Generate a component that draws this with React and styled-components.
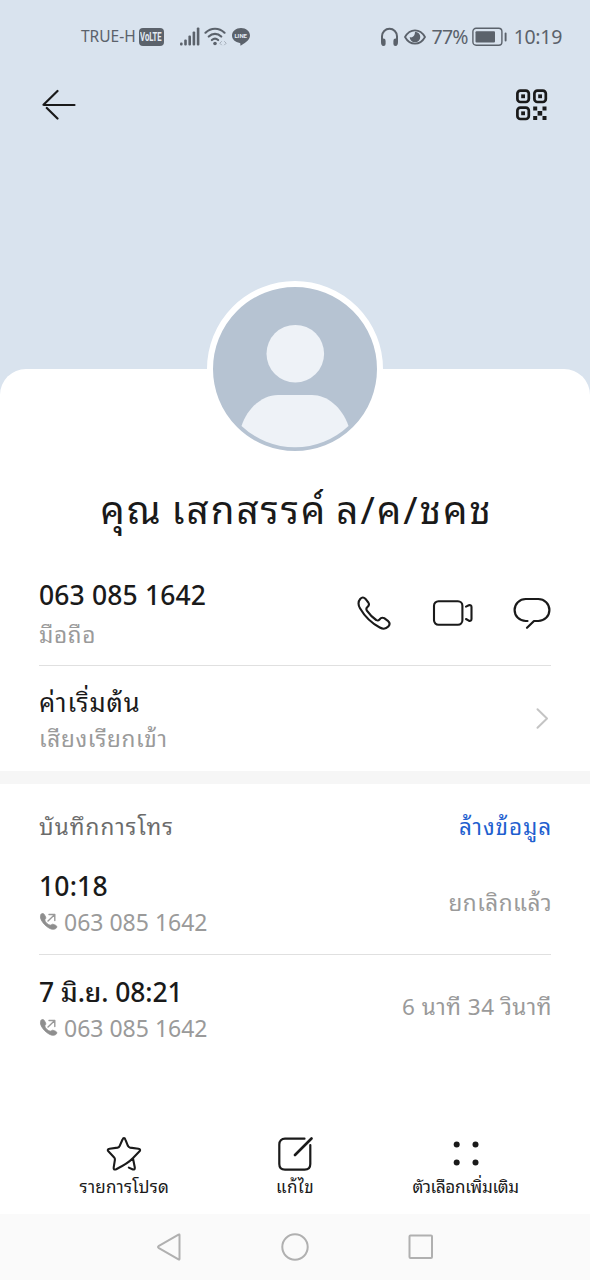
import styled, {createGlobalStyle} from "styled-components";

const GlobalStyle = createGlobalStyle`
  * {
    box-sizing: border-box;
  }

  body {
    margin: 0;
    background: #fff;
    font-family: "Noto Sans", "Noto Sans Thai Looped", "Noto Looped Thai", "Loma", "Garuda", "Waree", "Noto Sans Thai", sans-serif;
  }

  svg {
    display: block;
    flex: none;
    fill: none;
    stroke-linecap: round;
    stroke-linejoin: round;
  }
`;

const Screen = styled.div`
  width: 590px;
  height: 1280px;
  display: flex;
  flex-direction: column;
  overflow: hidden;
  background: #d9e3ee;
`;

const StatusBar = styled.div`
  height: 74px;
  padding: 0 28px 0 81px;
  display: flex;
  align-items: center;
  justify-content: space-between;
  color: #5b626b;
`;

const StatusGroup = styled.div`
  display: flex;
  align-items: center;
  gap: ${props => props.$gap || 0}px;
`;

const AppBar = styled.div`
  height: 62px;
  padding: 0 42px;
  display: flex;
  align-items: center;
  justify-content: space-between;
`;

const Hero = styled.div`
  height: 233px;
  flex: none;
`;

const Sheet = styled.main`
  height: 845px;
  flex: none;
  display: flex;
  flex-direction: column;
  background: #fff;
  border-radius: 26px 26px 0 0;
`;

// 프로필 사진은 시트 위쪽에 반쯤 걸친다
const Avatar = styled.div`
  width: 176px;
  height: 176px;
  margin: -88px auto 0;
  flex: none;
  border-radius: 50%;
  border: 6px solid #fff;
  background: #b6c3d2;
  overflow: hidden;
`;

const NameRow = styled.div`
  height: 103px;
  padding-top: 25px;
  display: flex;
  justify-content: center;
  word-spacing: -3px;
`;

const Row = styled.div`
  height: ${props => props.$height}px;
  margin: 0 39px;
  padding-top: ${props => props.$top || 0}px;
  flex: none;
  display: flex;
  justify-content: space-between;
  border-bottom: ${props => (props.$line ? "1px solid #e0e0e0" : "none")};
`;

const Column = styled.div`
  display: flex;
  flex-direction: column;
  align-items: flex-start;
`;

const SubLine = styled.div`
  display: flex;
  align-items: center;
  gap: 5px;
`;

const Actions = styled.div`
  display: flex;
  padding-top: ${props => props.$top || 0}px;
`;

const IconButton = styled.button`
  border: 0;
  padding: 0;
  margin: 0 0 0 ${props => props.$gap || 0}px;
  background: none;
  color: #1a1a1a;
  height: ${props => props.$height || 40}px;
  display: flex;
  align-items: center;
`;

const Text = styled.span`
  display: block;
  white-space: pre;
  font-size: ${props => props.$size}px;
  line-height: ${props => props.$line || 36}px;
  font-weight: ${props => props.$weight || 400};
  letter-spacing: ${props => props.$spacing || 0}px;
  color: ${props => props.$color || "inherit"};
  margin: ${props => props.$margin || 0};
`;

const Divider = styled.div`
  height: 13px;
  flex: none;
  background: #f6f6f6;
`;

const Toolbar = styled.div`
  margin-top: auto;
  height: 84px;
  padding: 0 39px;
  display: grid;
  grid-template-columns: repeat(3, 1fr);
`;

const Tool = styled.button`
  border: 0;
  padding: 6px 0 0;
  background: none;
  font-family: inherit;
  color: #1a1a1a;
  display: flex;
  flex-direction: column;
  align-items: center;
`;

const NavBar = styled.nav`
  height: 66px;
  flex: none;
  padding: 0 154px;
  background: #fafafa;
  display: flex;
  align-items: center;
  justify-content: space-between;
`;

const VoLte = styled.span`
  width: 25px;
  height: 18px;
  margin: 0 16px 0 3px;
  border-radius: 4px;
  background: #5b626b;
  display: flex;
  justify-content: center;
`;

const VoLteLabel = styled.span`
  color: #e4ebf3;
  font: 700 12px/18px "Roboto", sans-serif;
  transform: scaleX(0.64);
`;

const SignalIcon = () => (
    <svg width="20" height="20" viewBox="0 0 20 20">
        <g fill="currentColor">
            <rect x="0" y="15.500" width="2.6" height="3" rx="1"/>
            <rect x="4.2" y="12.500" width="2.6" height="6" rx="1"/>
            <rect x="8.4" y="8.500" width="2.6" height="10" rx="1"/>
            <rect x="12.6" y="4.500" width="2.6" height="14" rx="1"/>
            <rect x="16.8" y=".500" width="2.6" height="18" rx="1"/>
        </g>
    </svg>
);

const WifiIcon = () => (
    <svg width="24" height="20" viewBox="0 0 24 20" stroke="currentColor" strokeWidth="2.2">
        <path d="M1.5 5.700C7 .4 15 .4 20.500 5.700M4.800 9.500c3.600-3.500 8.800-3.500 12.400 0M7.900 13c1.900-1.700 4.300-1.700 6.200 0"/>
        <circle cx="11" cy="16.500" r="1.8" fill="currentColor" stroke="none"/>
        <path d="M17.500 14.500l-1.700 1.700 1.700 1.700M20.500 14.500l1.700 1.700-1.700 1.700" strokeWidth="1" opacity=".4"/>
    </svg>
);

const LineBadge = styled.span`
  position: relative;
  width: 18px;
  height: 18px;
  display: block;
`;

const LineLabel = styled.span`
  position: absolute;
  left: 0;
  top: 0;
  width: 18px;
  font: 700 6px/15px "Roboto", sans-serif;
  text-align: center;
  color: #e4ebf3;
`;

const HeadphoneIcon = () => (
    <svg width="19" height="20" viewBox="0 0 19 20" stroke="currentColor" strokeWidth="2">
        <path d="M2 14V9.300a7.500 7.500 0 0 1 15 0V14"/>
        <path d="M1 11.500h2.400a2.200 2.200 0 0 1 2.200 2.200V17a2 2 0 0 1-2 2C1.500 19 1 17 1 15zM18 11.500h-2.400a2.200 2.200 0 0 0-2.200 2.200V17a2 2 0 0 0 2 2C17.500 19 18 17 18 15z" fill="currentColor" stroke="none"/>
    </svg>
);

const EyeIcon = () => (
    <svg width="22" height="18" viewBox="0 0 22 18" stroke="currentColor" strokeWidth="1.8">
        <path d="M1 9C3.500 4.500 7 2.300 11 2.300S18.500 4.500 21 9c-2.500 4.500-6 6.700-10 6.700S3.500 13.500 1 9z"/>
        <path d="M11 3.700a5.300 5.300 0 1 1-5.300 5.300c2.200 1.300 5.300-.8 5.300-5.300z" fill="currentColor" stroke="none"/>
    </svg>
);

const BatteryIcon = () => (
    <svg width="35" height="20" viewBox="0 0 35 20" stroke="currentColor">
        <rect x=".9" y="1.300" width="29" height="17" rx="3.200" strokeWidth="1.400"/>
        <rect x="3.500" y="4.200" width="19.500" height="11.200" rx="1" fill="currentColor" stroke="none"/>
        <path d="M33.600 6.500v7" strokeWidth="1.900"/>
    </svg>
);

const BackIcon = () => (
    <svg width="34" height="32" viewBox="0 0 34 32" stroke="currentColor" strokeWidth="2.200">
        <path d="M2 16h30.500M15.500 2L1.500 15.700M4.800 19L15.500 29.500"/>
    </svg>
);

const QrIcon = () => (
    <svg width="32" height="32" viewBox="0 0 32 32" stroke="currentColor" strokeWidth="2.700">
        <rect x="1.400" y="1.600" width="11.400" height="11.400" rx="3"/>
        <rect x="18.400" y="1.600" width="11.400" height="11.400" rx="3"/>
        <rect x="1.400" y="18.600" width="11.400" height="11.400" rx="3"/>
        <g fill="currentColor" stroke="none">
            <rect x="5.200" y="5.400" width="3.800" height="3.800"/>
            <rect x="22.200" y="5.400" width="3.800" height="3.800"/>
            <rect x="5.200" y="22.400" width="3.800" height="3.800"/>
            <rect x="17.200" y="17.500" width="4" height="4"/>
            <rect x="26.500" y="17.500" width="4" height="4"/>
            <rect x="21.600" y="22" width="4.600" height="4.600"/>
            <rect x="17.200" y="27" width="4" height="4"/>
            <rect x="26.500" y="27" width="4" height="4"/>
        </g>
    </svg>
);

const PersonIcon = () => (
    <svg width="164" height="164" viewBox="0 0 164 164">
        <circle cx="82.300" cy="66.700" r="28.800" fill="#eef2f7"/>
        <path d="M65 108H99C114 108 129 120 135.500 139A78 78 0 0 1 28.500 139C35 120 50 108 65 108Z" fill="#eef2f7"/>
    </svg>
);

const PhoneIcon = () => (
    <svg width="34" height="34" viewBox="0 0 34 34" stroke="currentColor" strokeWidth="2.100">
        <path d="M3.200 3C5 1.100 6.700 1 8.300 2.700L11.300 6.500C12.700 8.500 12 9.800 10.300 11.200C8.900 12.300 9.100 13.400 10.100 14.900C12.600 18.500 16 21.900 19.200 24C20.500 24.900 21.500 24.700 22.500 23.500C23.900 21.700 25.200 21.100 27.200 22.200L31.200 25.200C33 26.800 33 28.600 31.300 30.600C29 33 25.800 33.200 22.800 31.500C14.700 27.300 7.500 20.100 3 12.300C1.100 8.900 1.100 5.500 3.200 3Z"/>
    </svg>
);

const VideoIcon = () => (
    <svg width="42" height="28" viewBox="0 0 42 28" stroke="currentColor" strokeWidth="2.100">
        <rect x="2" y="2.200" width="28.400" height="23.600" rx="4.500"/>
        <path d="M34 7.600L36.800 6.300C38.400 5.700 39.500 6.500 39.500 8V20C39.500 21.500 38.400 22.300 36.800 21.700L34 20"/>
    </svg>
);

const ChatIcon = () => (
    <svg width="38" height="34" viewBox="0 0 38 34" stroke="currentColor" strokeWidth="2.200">
        <path d="M14.500 25H12.800C6.500 25 1.600 20.200 1.600 14S6.500 3 12.800 3H25.200C31.500 3 36.400 7.800 36.400 14S31.500 25 25.200 25H21L14 31.800"/>
    </svg>
);

const ChevronIcon = () => (
    <svg width="15" height="24" viewBox="0 0 15 24" stroke="#c4c4c4" strokeWidth="2">
        <path d="M1.500 2.300L11 11.500L1.500 20.700"/>
    </svg>
);

const OutgoingIcon = () => (
    <svg width="20" height="20" viewBox="0 0 20 20">
        <path d="M2.200 2.200C3.500.9 4.800 1.500 5.600 3L6.700 5.200C7.300 6.700 5.700 7 5.800 8C6.200 10.300 8.700 12.700 11.200 13.200C12.500 13.300 12.700 11.800 14.200 12.300L16.900 13.400C18.300 14.100 18 15.600 16.700 16.600C14.400 18.200 10.800 17 7.400 14.200C2.500 10 0 5 2.200 2.200Z" fill="#8e8e8e" stroke="#8e8e8e" strokeWidth=".800"/>
        <path d="M9 9L15.500 2.800M10 2.500H15.800V8.500" stroke="#9a9a9a" strokeWidth="1.400"/>
    </svg>
);

const StarIcon = () => (
    <svg width="36" height="36" viewBox="0 0 36 36" stroke="currentColor" strokeWidth="2.100">
        <path d="M26.800 22.200L33.300 15.600C34.700 14.200 34.300 13.100 32.400 12.800L24.100 11.600C23 11.400 22.500 11 22 10.100L19.500 3.800C18.700 1.600 17.300 1.600 16.400 3.800L13.600 10.100C13.200 11 12.600 11.400 11.600 11.600L3.600 12.700C1.600 13 1.200 14.200 2.600 15.600L8.200 21.400C8.900 22.200 9 22.900 8.900 23.800L7.700 31.300C7.400 33.300 8.300 34 10.200 33.200C17.500 29.500 23 26.300 26.800 22.200M27 22.500L28.800 31.500C29 33.300 28 34 26.400 33.200L22.800 31.600"/>
    </svg>
);

const EditIcon = () => (
    <svg width="36" height="36" viewBox="0 0 36 36" stroke="currentColor" strokeWidth="2.200">
        <path d="M27.500 2.700H8C4.500 2.700 2.300 4.900 2.300 8.400V28C2.300 31.500 4.500 33.700 8 33.700H27.600C31.100 33.700 33.300 31.500 33.300 28V9"/>
        <path d="M18 19L34.500 2.500" strokeWidth="2.600"/>
    </svg>
);

const MoreIcon = () => (
    <svg width="36" height="36" viewBox="0 0 36 36">
        <g fill="currentColor">
            <circle cx="8.700" cy="8.500" r="3"/>
            <circle cx="27.500" cy="8.500" r="3"/>
            <circle cx="8.700" cy="26.500" r="3"/>
            <circle cx="27.500" cy="26.500" r="3"/>
        </g>
    </svg>
);

const NavIcon = ({children}) => (
    <svg width="30" height="30" viewBox="0 0 30 30" stroke="#b0b0b0" strokeWidth="2">
        {children}
    </svg>
);

const calls = [
    {time: "10:18", spacing: 0.2, status: "ยกเลิกแล้ว", top: 18, statusTop: 17, line: true},
    {time: "7 มิ.ย. 08:21", spacing: -0.1, status: "6 นาที 34 วินาที", top: 19, statusTop: 15, line: false}
];

const tools = [
    {label: "รายการโปรด", icon: <StarIcon/>, spacing: 0.25},
    {label: "แก้ไข", icon: <EditIcon/>, spacing: 0.4},
    {label: "ตัวเลือกเพิ่มเติม", icon: <MoreIcon/>, spacing: -0.3}
];

function App() {
    return (
        <>
            <GlobalStyle/>
            <Screen>
                <StatusBar>
                    <StatusGroup>
                        <Text $size={15.5} $line={20} $margin="-3px 0 0">TRUE-H</Text>
                        <VoLte><VoLteLabel>VoLTE</VoLteLabel></VoLte>
                        <StatusGroup $gap={4}>
                            <SignalIcon/>
                            <WifiIcon/>
                            <LineBadge>
                                <svg width="18" height="18" viewBox="0 0 18 18">
                                    <path d="M9 0C4 0 0 3.300 0 7.500c0 3.800 3.300 6.800 7.800 7.400.8.200.5 1.200.7 2.800 3-1.600 9.500-5.300 9.500-10.200C18 3.300 14 0 9 0z" fill="#5b626b"/>
                                </svg>
                                <LineLabel>LINE</LineLabel>
                            </LineBadge>
                        </StatusGroup>
                    </StatusGroup>
                    <StatusGroup $gap={5}>
                        <HeadphoneIcon/>
                        <EyeIcon/>
                        <Text $size={19.5} $line={24} $spacing={-0.8} $margin="0 -1px 0 1px">77%</Text>
                        <BatteryIcon/>
                        <Text $size={19.5} $line={24} $spacing={-0.3} $margin="0 0 0 2px">10:19</Text>
                    </StatusGroup>
                </StatusBar>
                <AppBar>
                    <IconButton><BackIcon/></IconButton>
                    <IconButton><QrIcon/></IconButton>
                </AppBar>
                <Hero/>
                <Sheet>
                    <Avatar><PersonIcon/></Avatar>
                    <NameRow>
                        <Text $size={38.5} $line={54} $spacing={2} $color="#1a1a1a" $margin="0 0 0 3px">คุณ เสกสรรค์ ล/ค/ชคช</Text>
                    </NameRow>
                    <Row $height={106} $top={17} $line>
                        <Column>
                            <Text $size={26.5} $weight={500} $spacing={0.15} $color="#1a1a1a">063 085 1642</Text>
                            <Text $size={22.5} $spacing={0.7} $color="#9a9a9a" $margin="4px 0 0">มือถือ</Text>
                        </Column>
                        <Actions $top={16}>
                            <IconButton><PhoneIcon/></IconButton>
                            <IconButton $gap={41}><VideoIcon/></IconButton>
                            <IconButton $gap={39}><ChatIcon/></IconButton>
                        </Actions>
                    </Row>
                    <Row $height={105} $top={18}>
                        <Column>
                            <Text $size={25.5} $spacing={0.9} $color="#1a1a1a">ค่าเริ่มต้น</Text>
                            <Text $size={22.5} $spacing={0.7} $color="#9a9a9a" $margin="1px 0 0">เสียงเรียกเข้า</Text>
                        </Column>
                        <Actions $top={15}>
                            <IconButton><ChevronIcon/></IconButton>
                        </Actions>
                    </Row>
                    <Divider/>
                    <Row $height={66} $top={25}>
                        <Text $size={22.5} $spacing={1.1} $color="#6b6b6b">บันทึกการโทร</Text>
                        <Text $size={22.5} $spacing={0.9} $color="#1f5fcf" $margin="0 -1px 0 0">ล้างข้อมูล</Text>
                    </Row>
                    {calls.map(call => (
                        <Row key={call.time} $height={105} $top={call.top} $line={call.line}>
                            <Column>
                                <Text $size={26.5} $weight={500} $spacing={call.spacing} $color="#1a1a1a">{call.time}</Text>
                                <SubLine>
                                    <OutgoingIcon/>
                                    <Text $size={23} $color="#9a9a9a">063 085 1642</Text>
                                </SubLine>
                            </Column>
                            <Text $size={22.5} $spacing={0.5} $color="#9a9a9a" $margin={`${call.statusTop}px -1px 0 0`}>{call.status}</Text>
                        </Row>
                    ))}
                    <Toolbar>
                        {tools.map(tool => (
                            <Tool key={tool.label}>
                                {tool.icon}
                                <Text $size={17} $line={30} $spacing={tool.spacing}>{tool.label}</Text>
                            </Tool>
                        ))}
                    </Toolbar>
                </Sheet>
                <NavBar>
                    <NavIcon><path d="M25.500 3.200V26.800Q25.500 28 24.500 27.400L4.500 15.800Q3.500 15 4.500 14.200L24.500 2.600Q25.500 2 25.500 3.200Z"/></NavIcon>
                    <NavIcon><circle cx="15" cy="15" r="12.700"/></NavIcon>
                    <NavIcon><rect x="3.500" y="3.500" width="22.500" height="22.500" rx="1"/></NavIcon>
                </NavBar>
            </Screen>
        </>
    );
}

export default App;
